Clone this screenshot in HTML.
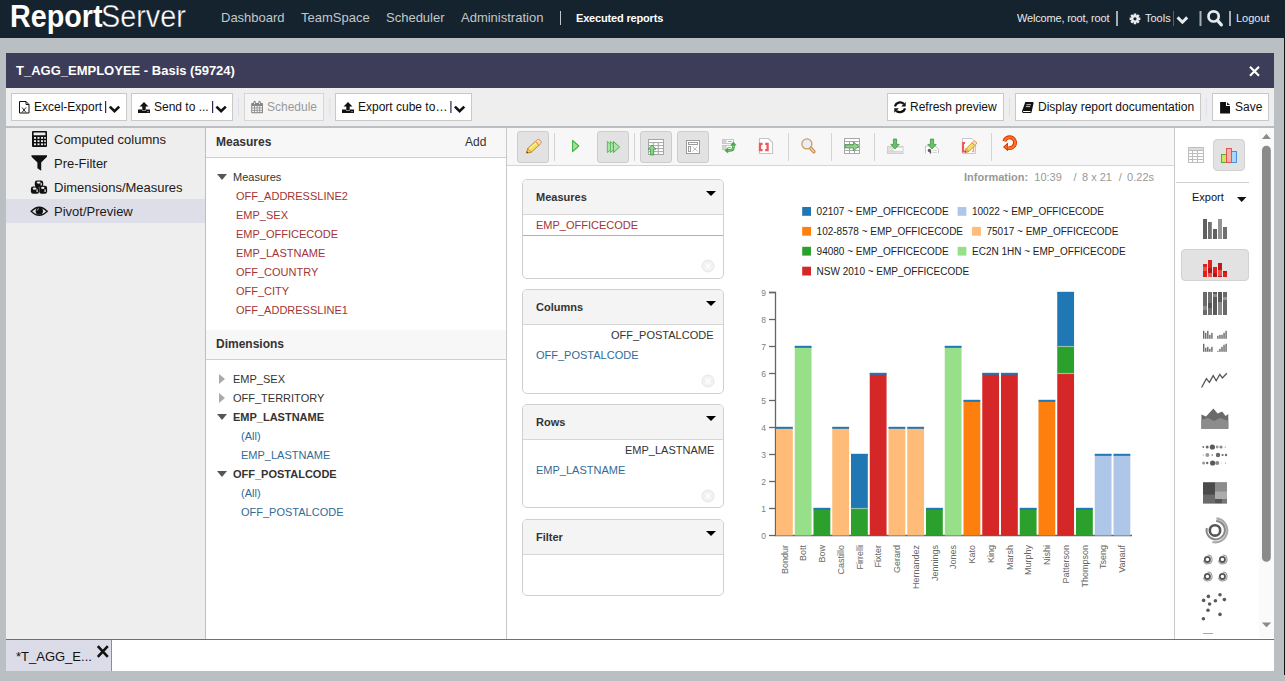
<!DOCTYPE html>
<html><head><meta charset="utf-8">
<style>
*{box-sizing:border-box;margin:0;padding:0}
html,body{width:1285px;height:681px;overflow:hidden}
body{background:#b9bfc2;font-family:"Liberation Sans",sans-serif;position:relative;color:#222}
.a{position:absolute;white-space:nowrap}
#nav{left:0;top:0;width:1285px;height:38px;background:#15232f}
.nv{color:#c3c7cb;font-size:13px;top:10px}
.nr{color:#e8eaec;font-size:11px;top:12px}
.sep{background:#9aa0a6;width:2px;height:16px;top:11px}
#win{left:6px;top:53px;width:1268px;height:618px;background:#fff}
#title{left:6px;top:53px;width:1268px;height:35px;background:#3d3c59}
#tb{left:6px;top:88px;width:1268px;height:40px;background:#eeeeee;border-bottom:2px solid #b9bfc2}
.btn{height:28px;top:93px;background:#fff;border:1px solid #c9c9c9;font-size:12px;color:#111;line-height:26px}
#lnav{left:6px;top:128px;width:200px;height:511px;background:#eeeeee;border-right:1px solid #b9bfc2}
.li{font-size:13px;color:#1a1a1a;left:54px}
#mp{left:206px;top:128px;width:301px;height:511px;background:#fff;border-right:1px solid #c5c9cc}
.ph{background:#f7f7f7;border-bottom:1px solid #d0d0d0;font-size:12px;font-weight:bold;color:#333}
.red{color:#a33434;font-size:11px}
.blu{color:#336a96;font-size:11px}
.dk{color:#333;font-size:11px}
#pv{left:507px;top:128px;width:668px;height:511px;background:#fff}
#ptb{left:507px;top:128px;width:667px;height:38px;background:#f7f7f7;border-bottom:1px solid #d4d4d4}
#rp{left:1174px;top:128px;width:100px;height:511px;background:#fff;border-left:1px solid #c9c9c9}
#tabs{left:6px;top:639px;width:1268px;height:32px;background:#fff;border-top:1px solid #6c6c86}
.box{left:522px;width:202px;border:1px solid #cfcfcf;border-radius:5px;background:#fff;overflow:hidden}
.bh{height:35px;background:#f4f4f4;border-bottom:1px solid #d6d6d6;font-size:11px;line-height:14px;font-weight:bold;color:#333;padding:10px 0 0 13px;position:relative}
.bh:after{content:"";position:absolute;right:7px;top:11px;border-left:5px solid transparent;border-right:5px solid transparent;border-top:5px solid #000}
.tri{width:0;height:0;border-left:5px solid transparent;border-right:5px solid transparent;border-top:6px solid #555}
.trr{width:0;height:0;border-top:5px solid transparent;border-bottom:5px solid transparent;border-left:6px solid #aaa}
.tbtn{width:32px;height:32px;background:#e2e2e2;border:1px solid #cdcdcd;border-radius:3px}
.inf{top:170px;font-size:11px;color:#999;line-height:14px}
.vs{top:133px;width:1px;height:28px;background:#d4d4d4}
</style></head><body>
<div class="a" id="nav"></div>
<!-- logo -->
<div class="a" style="left:10px;top:-2px;font-size:31px;color:#fff;line-height:38px;transform-origin:0 0;transform:scaleX(0.927)"><b>Report</b></div>
<div class="a" style="left:101px;top:-2px;font-size:31px;color:#ffffff;line-height:38px;transform-origin:0 0;transform:scaleX(0.93);-webkit-text-stroke:0.4px #15232f">Server</div>
<div class="a nv" style="left:221px">Dashboard</div>
<div class="a nv" style="left:301px">TeamSpace</div>
<div class="a nv" style="left:386px">Scheduler</div>
<div class="a nv" style="left:461px">Administration</div>
<div class="a" style="left:560px;top:11px;width:1px;height:14px;background:#c3c7cb"></div>
<div class="a" style="left:576px;top:12px;font-size:11px;font-weight:bold;color:#fff;letter-spacing:-0.17px">Executed reports</div>
<div class="a nr" style="left:1017px;letter-spacing:-0.18px">Welcome, root, root</div>
<div class="a nr" style="left:1145px">Tools</div>
<div class="a nr" style="left:1236px">Logout</div>

<div class="a" id="win"></div>
<div class="a" id="title"></div>
<div class="a" style="left:16px;top:63px;font-size:13px;font-weight:bold;color:#fff">T_AGG_EMPLOYEE - Basis (59724)</div>
<div class="a" id="tb"></div>
<div class="a btn" style="left:11px;width:116px;padding-left:22px">Excel-Export</div>
<div class="a btn" style="left:131px;width:102px;padding-left:22px">Send to ...</div>
<div class="a btn" style="left:244px;width:80px;padding-left:22px;color:#999;background:#f5f5f5;border-color:#d6d6d6">Schedule</div>
<div class="a btn" style="left:335px;width:137px;padding-left:22px">Export cube to…</div>
<div class="a btn" style="left:887px;width:117px;padding-left:22px">Refresh preview</div>
<div class="a btn" style="left:1015px;width:186px;padding-left:22px">Display report documentation</div>
<div class="a btn" style="left:1212px;width:57px;padding-left:22px">Save</div>

<div class="a" id="lnav"></div>
<div class="a" style="left:6px;top:199px;width:199px;height:24px;background:#dedee9"></div>
<div class="a li" style="top:132px">Computed columns</div>
<div class="a li" style="top:156px">Pre-Filter</div>
<div class="a li" style="top:180px">Dimensions/Measures</div>
<div class="a li" style="top:204px">Pivot/Preview</div>

<div class="a" id="mp"></div>
<div class="a ph" style="left:206px;top:128px;width:300px;height:30px"></div>
<div class="a" style="left:216px;top:135px;font-size:12px;font-weight:bold;color:#333;line-height:14px">Measures</div>
<div class="a" style="left:465px;top:135px;font-size:12px;color:#333;line-height:14px">Add</div>
<div class="a tri" style="left:217px;top:174px"></div>
<div class="a dk" style="left:233px;top:170px;line-height:14px">Measures</div>
<div class="a red" style="left:236px;top:189px;line-height:14px">OFF_ADDRESSLINE2</div>
<div class="a red" style="left:236px;top:208px;line-height:14px">EMP_SEX</div>
<div class="a red" style="left:236px;top:227px;line-height:14px">EMP_OFFICECODE</div>
<div class="a red" style="left:236px;top:246px;line-height:14px">EMP_LASTNAME</div>
<div class="a red" style="left:236px;top:265px;line-height:14px">OFF_COUNTRY</div>
<div class="a red" style="left:236px;top:284px;line-height:14px">OFF_CITY</div>
<div class="a red" style="left:236px;top:303px;line-height:14px">OFF_ADDRESSLINE1</div>
<div class="a ph" style="left:206px;top:330px;width:300px;height:30px;border-top:0"></div>
<div class="a" style="left:216px;top:337px;font-size:12px;font-weight:bold;color:#333;line-height:14px">Dimensions</div>
<div class="a trr" style="left:219px;top:374px"></div>
<div class="a dk" style="left:233px;top:372px;line-height:14px">EMP_SEX</div>
<div class="a trr" style="left:219px;top:393px"></div>
<div class="a dk" style="left:233px;top:391px;line-height:14px">OFF_TERRITORY</div>
<div class="a tri" style="left:217px;top:414px"></div>
<div class="a dk" style="left:233px;top:410px;line-height:14px;font-weight:bold">EMP_LASTNAME</div>
<div class="a blu" style="left:241px;top:429px;line-height:14px">(All)</div>
<div class="a blu" style="left:241px;top:448px;line-height:14px">EMP_LASTNAME</div>
<div class="a tri" style="left:217px;top:471px"></div>
<div class="a dk" style="left:233px;top:467px;line-height:14px;font-weight:bold">OFF_POSTALCODE</div>
<div class="a blu" style="left:241px;top:486px;line-height:14px">(All)</div>
<div class="a blu" style="left:241px;top:505px;line-height:14px">OFF_POSTALCODE</div>

<div class="a" id="pv"></div>
<div class="a" id="ptb"></div>
<div class="a tbtn" style="left:517px;top:131px"></div>
<div class="a tbtn" style="left:597px;top:131px"></div>
<div class="a tbtn" style="left:640px;top:131px"></div>
<div class="a tbtn" style="left:677px;top:131px"></div>
<div class="a vs" style="left:554px"></div>
<div class="a vs" style="left:634px"></div>
<div class="a vs" style="left:788px"></div>
<div class="a vs" style="left:831px"></div>
<div class="a vs" style="left:874px"></div>
<div class="a vs" style="left:991px"></div>
<div class="a inf" style="left:964px"><b>Information:</b></div>
<div class="a inf" style="left:1034.3px">10:39</div>
<div class="a inf" style="left:1073.6px">/</div>
<div class="a inf" style="left:1082px">8 x 21</div>
<div class="a inf" style="left:1118.8px">/</div>
<div class="a inf" style="left:1127.1px">0.22s</div>

<div class="a box" style="top:179px;height:100px"><div class="bh">Measures</div></div>
<div class="a red" style="left:536px;top:218px;line-height:14px">EMP_OFFICECODE</div>
<div class="a" style="left:523px;top:235px;width:200px;height:1px;background:#e59a9a"></div>
<div class="a box" style="top:289px;height:105px"><div class="bh">Columns</div></div>
<div class="a dk" style="left:611px;top:328px;line-height:14px">OFF_POSTALCODE</div>
<div class="a blu" style="left:536px;top:348px;line-height:14px">OFF_POSTALCODE</div>
<div class="a box" style="top:404px;height:104px"><div class="bh">Rows</div></div>
<div class="a dk" style="left:625px;top:443px;line-height:14px">EMP_LASTNAME</div>
<div class="a blu" style="left:536px;top:463px;line-height:14px">EMP_LASTNAME</div>
<div class="a box" style="top:519px;height:77px"><div class="bh">Filter</div></div>
<svg class="a" style="left:0;top:0" width="1285" height="681" font-family="Liberation Sans, sans-serif"><path d="M769 292.5H775.5V535.5H1132" fill="none" stroke="#666" stroke-width="1.3"/><path d="M769 535.5H775.5" stroke="#666" stroke-width="1.3"/><text x="766" y="538.5" text-anchor="end" font-size="8.5" fill="#808080">0</text><path d="M769 508.5H775.5" stroke="#666" stroke-width="1.3"/><text x="766" y="511.5" text-anchor="end" font-size="8.5" fill="#808080">1</text><path d="M769 481.5H775.5" stroke="#666" stroke-width="1.3"/><text x="766" y="484.5" text-anchor="end" font-size="8.5" fill="#808080">2</text><path d="M769 454.5H775.5" stroke="#666" stroke-width="1.3"/><text x="766" y="457.5" text-anchor="end" font-size="8.5" fill="#808080">3</text><path d="M769 427.5H775.5" stroke="#666" stroke-width="1.3"/><text x="766" y="430.5" text-anchor="end" font-size="8.5" fill="#808080">4</text><path d="M769 400.5H775.5" stroke="#666" stroke-width="1.3"/><text x="766" y="403.5" text-anchor="end" font-size="8.5" fill="#808080">5</text><path d="M769 373.5H775.5" stroke="#666" stroke-width="1.3"/><text x="766" y="376.5" text-anchor="end" font-size="8.5" fill="#808080">6</text><path d="M769 346.5H775.5" stroke="#666" stroke-width="1.3"/><text x="766" y="349.5" text-anchor="end" font-size="8.5" fill="#808080">7</text><path d="M769 319.5H775.5" stroke="#666" stroke-width="1.3"/><text x="766" y="322.5" text-anchor="end" font-size="8.5" fill="#808080">8</text><path d="M769 292.5H775.5" stroke="#666" stroke-width="1.3"/><text x="766" y="295.5" text-anchor="end" font-size="8.5" fill="#808080">9</text><rect x="776.00" y="427.50" width="16.8" height="108.00" fill="#ffbb78"/><rect x="776.00" y="426.80" width="16.8" height="2" fill="#1f77b4"/><text transform="translate(787.6,545) rotate(-90)" text-anchor="end" font-size="9" fill="#666">Bondur</text><rect x="794.75" y="346.50" width="16.8" height="189.00" fill="#98df8a"/><rect x="794.75" y="345.80" width="16.8" height="2" fill="#1f77b4"/><text transform="translate(806.4,545) rotate(-90)" text-anchor="end" font-size="9" fill="#666">Bott</text><rect x="813.50" y="508.50" width="16.8" height="27.00" fill="#2ca02c"/><rect x="813.50" y="507.80" width="16.8" height="2" fill="#1f77b4"/><text transform="translate(825.1,545) rotate(-90)" text-anchor="end" font-size="9" fill="#666">Bow</text><rect x="832.25" y="427.50" width="16.8" height="108.00" fill="#ffbb78"/><rect x="832.25" y="426.80" width="16.8" height="2" fill="#1f77b4"/><text transform="translate(843.9,545) rotate(-90)" text-anchor="end" font-size="9" fill="#666">Castillo</text><rect x="851.00" y="508.50" width="16.8" height="27.00" fill="#2ca02c"/><rect x="851.00" y="454.50" width="16.8" height="54.00" fill="#1f77b4"/><rect x="851.00" y="453.80" width="16.8" height="2" fill="#1f77b4"/><rect x="851.00" y="507.90" width="16.8" height="1.2" fill="#b8d8a8" opacity="0.6"/><text transform="translate(862.6,545) rotate(-90)" text-anchor="end" font-size="9" fill="#666">Firrelli</text><rect x="869.75" y="373.50" width="16.8" height="162.00" fill="#d62728"/><rect x="869.75" y="372.80" width="16.8" height="2" fill="#1f77b4"/><text transform="translate(881.4,545) rotate(-90)" text-anchor="end" font-size="9" fill="#666">Fixter</text><rect x="888.50" y="427.50" width="16.8" height="108.00" fill="#ffbb78"/><rect x="888.50" y="426.80" width="16.8" height="2" fill="#1f77b4"/><text transform="translate(900.1,545) rotate(-90)" text-anchor="end" font-size="9" fill="#666">Gerard</text><rect x="907.25" y="427.50" width="16.8" height="108.00" fill="#ffbb78"/><rect x="907.25" y="426.80" width="16.8" height="2" fill="#1f77b4"/><text transform="translate(918.9,545) rotate(-90)" text-anchor="end" font-size="9" fill="#666">Hernandez</text><rect x="926.00" y="508.50" width="16.8" height="27.00" fill="#2ca02c"/><rect x="926.00" y="507.80" width="16.8" height="2" fill="#1f77b4"/><text transform="translate(937.6,545) rotate(-90)" text-anchor="end" font-size="9" fill="#666">Jennings</text><rect x="944.75" y="346.50" width="16.8" height="189.00" fill="#98df8a"/><rect x="944.75" y="345.80" width="16.8" height="2" fill="#1f77b4"/><text transform="translate(956.4,545) rotate(-90)" text-anchor="end" font-size="9" fill="#666">Jones</text><rect x="963.50" y="400.50" width="16.8" height="135.00" fill="#ff7f0e"/><rect x="963.50" y="399.80" width="16.8" height="2" fill="#1f77b4"/><text transform="translate(975.1,545) rotate(-90)" text-anchor="end" font-size="9" fill="#666">Kato</text><rect x="982.25" y="373.50" width="16.8" height="162.00" fill="#d62728"/><rect x="982.25" y="372.80" width="16.8" height="2" fill="#1f77b4"/><text transform="translate(993.9,545) rotate(-90)" text-anchor="end" font-size="9" fill="#666">King</text><rect x="1001.00" y="373.50" width="16.8" height="162.00" fill="#d62728"/><rect x="1001.00" y="372.80" width="16.8" height="2" fill="#1f77b4"/><text transform="translate(1012.6,545) rotate(-90)" text-anchor="end" font-size="9" fill="#666">Marsh</text><rect x="1019.75" y="508.50" width="16.8" height="27.00" fill="#2ca02c"/><rect x="1019.75" y="507.80" width="16.8" height="2" fill="#1f77b4"/><text transform="translate(1031.4,545) rotate(-90)" text-anchor="end" font-size="9" fill="#666">Murphy</text><rect x="1038.50" y="400.50" width="16.8" height="135.00" fill="#ff7f0e"/><rect x="1038.50" y="399.80" width="16.8" height="2" fill="#1f77b4"/><text transform="translate(1050.1,545) rotate(-90)" text-anchor="end" font-size="9" fill="#666">Nishi</text><rect x="1057.25" y="373.50" width="16.8" height="162.00" fill="#d62728"/><rect x="1057.25" y="346.50" width="16.8" height="27.00" fill="#2ca02c"/><rect x="1057.25" y="292.50" width="16.8" height="54.00" fill="#1f77b4"/><rect x="1057.25" y="291.80" width="16.8" height="2" fill="#1f77b4"/><rect x="1057.25" y="372.90" width="16.8" height="1.2" fill="#b8d8a8" opacity="0.6"/><rect x="1057.25" y="345.90" width="16.8" height="1.2" fill="#b8d8a8" opacity="0.6"/><text transform="translate(1068.9,545) rotate(-90)" text-anchor="end" font-size="9" fill="#666">Patterson</text><rect x="1076.00" y="508.50" width="16.8" height="27.00" fill="#2ca02c"/><rect x="1076.00" y="507.80" width="16.8" height="2" fill="#1f77b4"/><text transform="translate(1087.6,545) rotate(-90)" text-anchor="end" font-size="9" fill="#666">Thompson</text><rect x="1094.75" y="454.50" width="16.8" height="81.00" fill="#aec7e8"/><rect x="1094.75" y="453.80" width="16.8" height="2" fill="#1f77b4"/><text transform="translate(1106.4,545) rotate(-90)" text-anchor="end" font-size="9" fill="#666">Tseng</text><rect x="1113.50" y="454.50" width="16.8" height="81.00" fill="#aec7e8"/><rect x="1113.50" y="453.80" width="16.8" height="2" fill="#1f77b4"/><text transform="translate(1125.1,545) rotate(-90)" text-anchor="end" font-size="9" fill="#666">Vanauf</text><rect x="802.2" y="207.0" width="8.8" height="8.8" fill="#1f77b4"/><text x="816.6" y="215.0" font-size="10" fill="#222">02107 ~ EMP_OFFICECODE</text><rect x="957.6" y="207.0" width="8.8" height="8.8" fill="#aec7e8"/><text x="972.0" y="215.0" font-size="10" fill="#222">10022 ~ EMP_OFFICECODE</text><rect x="802.2" y="226.9" width="8.8" height="8.8" fill="#ff7f0e"/><text x="816.6" y="234.9" font-size="10" fill="#222">102-8578 ~ EMP_OFFICECODE</text><rect x="972.1" y="226.9" width="8.8" height="8.8" fill="#ffbb78"/><text x="986.5" y="234.9" font-size="10" fill="#222">75017 ~ EMP_OFFICECODE</text><rect x="802.2" y="246.8" width="8.8" height="8.8" fill="#2ca02c"/><text x="816.6" y="254.8" font-size="10" fill="#222">94080 ~ EMP_OFFICECODE</text><rect x="957.6" y="246.8" width="8.8" height="8.8" fill="#98df8a"/><text x="972.0" y="254.8" font-size="10" fill="#222">EC2N 1HN ~ EMP_OFFICECODE</text><rect x="802.2" y="266.7" width="8.8" height="8.8" fill="#d62728"/><text x="816.6" y="274.7" font-size="10" fill="#222">NSW 2010 ~ EMP_OFFICECODE</text></svg>

<div class="a" id="rp"></div>
<div class="a" style="left:1213px;top:139px;width:32px;height:32px;background:#e2e2e2;border:1px solid #d2d2d2;border-radius:4px"></div>
<div class="a" style="left:1176px;top:182px;width:73px;height:1px;background:#cfcfcf"></div>
<div class="a" style="left:1192px;top:190px;font-size:11px;line-height:14px;color:#111">Export</div>
<div class="a" style="left:1181px;top:249px;width:68px;height:32px;background:#e2e2e2;border:1px solid #d2d2d2;border-radius:4px"></div>
<div class="a" id="tabs"></div>
<div class="a" style="left:6px;top:640px;width:106px;height:31px;background:#dcdce8;border-right:1px solid #8a8aa6"></div>
<div class="a" style="left:16px;top:649px;font-size:13px;color:#111">*T_AGG_E...</div>
<div class="a" style="left:1284px;top:38px;width:1px;height:637px;background:#141414"></div>
<svg class="a" style="left:0;top:0" width="1285" height="681">
<!-- top nav -->
<rect x="1116" y="11" width="2" height="15" fill="#a7adb2"/>
<g transform="translate(1135,18.8)" fill="#e8eaec"><path d="M3.65,-1.37 L5.37,-1.20 L5.37,1.20 L3.65,1.37 L3.55,1.61 L4.64,2.95 L2.95,4.64 L1.61,3.55 L1.37,3.65 L1.20,5.37 L-1.20,5.37 L-1.37,3.65 L-1.61,3.55 L-2.95,4.64 L-4.64,2.95 L-3.55,1.61 L-3.65,1.37 L-5.37,1.20 L-5.37,-1.20 L-3.65,-1.37 L-3.55,-1.61 L-4.64,-2.95 L-2.95,-4.64 L-1.61,-3.55 L-1.37,-3.65 L-1.20,-5.37 L1.20,-5.37 L1.37,-3.65 L1.61,-3.55 L2.95,-4.64 L4.64,-2.95 L3.55,-1.61 Z M1.6,0 A1.6,1.6 0 1,0 -1.6,0 A1.6,1.6 0 1,0 1.6,0 Z" fill-rule="evenodd"/></g>
<rect x="1173" y="11" width="1" height="15" fill="#56606a"/>
<path d="M1177.6,17.4 L1182.4,22.2 L1187.2,17.4" fill="none" stroke="#e8eaec" stroke-width="3"/>
<rect x="1199.5" y="11" width="2" height="15" fill="#a7adb2"/>
<circle cx="1213.6" cy="16.4" r="5.1" fill="none" stroke="#e8eaec" stroke-width="2.7"/>
<path d="M1217.2,20.2 L1221.4,24.8" stroke="#e8eaec" stroke-width="3.2" stroke-linecap="round"/>
<rect x="1229" y="11" width="2" height="15" fill="#a7adb2"/>
<!-- window close -->
<path d="M1250,66.8 L1259,75.8 M1259,66.8 L1250,75.8" stroke="#fff" stroke-width="2.2"/>
<!-- toolbar -->
<g fill="none" stroke="#111" stroke-width="1">
<path d="M19.5,101.5 h6.5 l3,3 v8.5 h-9.5 z M26,101.5 v3 h3"/>
<path d="M22,107.5 l4,5 M26,107.5 l-4,5" stroke-width="0.9"/>
</g>
<g fill="#111">
<path d="M138,109.5 h4.2 v1.6 h3.6 v-1.6 h4.2 v3.6 h-12 z"/>
<path d="M144,102 l4.5,4.5 h-2.8 v4 h-3.4 v-4 h-2.8 z"/>
<rect x="147.5" y="111.2" width="1" height="1" fill="#fff"/>
<path d="M342,109.5 h4.2 v1.6 h3.6 v-1.6 h4.2 v3.6 h-12 z"/>
<path d="M348,102 l4.5,4.5 h-2.8 v4 h-3.4 v-4 h-2.8 z"/>
<rect x="351.5" y="111.2" width="1" height="1" fill="#fff"/>
</g>
<rect x="105" y="101" width="1.2" height="12" fill="#2b2b55"/>
<rect x="212" y="101" width="1.2" height="12" fill="#2b2b55"/>
<rect x="450.3" y="101" width="1.2" height="12" fill="#2b2b55"/>
<g fill="none" stroke="#111" stroke-width="2.6">
<path d="M109.8,106.6 L114.5,111.2 L119.2,106.6"/>
<path d="M216.4,106.6 L221.1,111.2 L225.8,106.6"/>
<path d="M454.9,106.6 L459.6,111.2 L464.3,106.6"/>
</g>
<g fill="#dde0ea">
<rect x="238" y="98" width="1" height="18"/>
<rect x="329.3" y="98" width="1" height="18"/>
<rect x="1009" y="98" width="1" height="18"/>
<rect x="1205.8" y="98" width="1" height="18"/>
</g>
<!-- calendar -->
<g>
<rect x="251.2" y="103" width="11.8" height="10.2" rx="0.8" fill="#858585"/>
<rect x="252.20" y="106.00" width="1.85" height="1.53" fill="#f5f5f5"/><rect x="252.20" y="108.33" width="1.85" height="1.53" fill="#f5f5f5"/><rect x="252.20" y="110.66" width="1.85" height="1.53" fill="#f5f5f5"/><rect x="254.85" y="106.00" width="1.85" height="1.53" fill="#f5f5f5"/><rect x="254.85" y="108.33" width="1.85" height="1.53" fill="#f5f5f5"/><rect x="254.85" y="110.66" width="1.85" height="1.53" fill="#f5f5f5"/><rect x="257.50" y="106.00" width="1.85" height="1.53" fill="#f5f5f5"/><rect x="257.50" y="108.33" width="1.85" height="1.53" fill="#f5f5f5"/><rect x="257.50" y="110.66" width="1.85" height="1.53" fill="#f5f5f5"/><rect x="260.15" y="106.00" width="1.85" height="1.53" fill="#f5f5f5"/><rect x="260.15" y="108.33" width="1.85" height="1.53" fill="#f5f5f5"/><rect x="260.15" y="110.66" width="1.85" height="1.53" fill="#f5f5f5"/>
<ellipse cx="254.6" cy="102.6" rx="1.2" ry="1.8" fill="#858585"/><ellipse cx="259.6" cy="102.6" rx="1.2" ry="1.8" fill="#858585"/>
<ellipse cx="254.6" cy="103.2" rx="0.5" ry="1" fill="#f0f0f0"/><ellipse cx="259.6" cy="103.2" rx="0.5" ry="1" fill="#f0f0f0"/>
</g>
<!-- refresh -->
<g fill="#111">
<path d="M894.9,106.3 A5.5,5.5 0 0 1 903.8,103.8" fill="none" stroke="#111" stroke-width="2.3"/>
<path d="M905.7,102 L905.7,106.5 L901.2,106.5 Z"/>
<path d="M905.1,108.3 A5.5,5.5 0 0 1 896.2,110.8" fill="none" stroke="#111" stroke-width="2.3"/>
<path d="M894.3,112.8 L894.3,108.3 L898.8,108.3 Z"/>
</g>
<!-- book -->
<g>
<path d="M1025.3,102 H1033 L1033.6,103 L1032,110.2 L1031.8,111.2 L1031.2,113 H1023.4 Q1021.6,113 1022,111.2 Z" fill="#111"/>
<path d="M1023.4,110.9 H1030.7 L1030.3,112 H1023.6 Q1022.9,112 1023,111.5 Z" fill="#fff"/>
<path d="M1026.4,104.7 H1031 M1025.9,106.6 H1030.2" stroke="#fff" stroke-width="0.75"/>
</g>
<!-- save file -->
<path d="M1220.1,102 H1226 V106 H1230 V113.6 H1220.1 Z M1227.1,102.2 L1230,105 H1227.1 Z" fill="#111"/>

<!-- left nav icons -->
<g fill="#111">
<path d="M33,131 h13 q1,0 1,1 v14 q0,1 -1,1 h-13 q-1,0 -1,-1 v-14 q0,-1 1,-1 z M33.6,132.4 v2.8 h11.8 v-2.8 z" fill-rule="evenodd"/>
</g>
<g fill="#eee">
<rect x="34" y="137" width="2" height="1.8"/><rect x="37.5" y="137" width="2" height="1.8"/><rect x="41" y="137" width="2" height="1.8"/><rect x="44.2" y="137" width="1.6" height="1.8"/>
<rect x="34" y="140.2" width="2" height="1.8"/><rect x="37.5" y="140.2" width="2" height="1.8"/><rect x="41" y="140.2" width="2" height="1.8"/><rect x="44.2" y="140.2" width="1.6" height="1.8"/>
<rect x="34" y="143.4" width="2" height="1.8"/><rect x="37.5" y="143.4" width="2" height="1.8"/><rect x="41" y="143.4" width="2" height="1.8"/><rect x="44.2" y="143.4" width="1.6" height="1.8"/>
</g>
<path d="M31.5,155.2 h15.5 v1.6 l-5.8,5.8 v8.2 l-3.8,-2.6 v-5.6 l-5.9,-5.8 z" fill="#111"/>
<g><rect x="34.8" y="180.5" width="8.4" height="6.8" rx="2.2" fill="#111"/><ellipse cx="38.60" cy="182.60" rx="2.00" ry="1.1" fill="#eee"/><rect x="40.60" y="182.90" width="1.2" height="2.6" fill="#eee"/><rect x="39.3" y="185.8" width="7.8" height="8" rx="2.2" fill="#111"/><ellipse cx="42.80" cy="187.90" rx="1.70" ry="1.1" fill="#eee"/><rect x="44.50" y="189.40" width="1.2" height="2.6" fill="#eee"/><rect x="30.9" y="186.6" width="8.2" height="7.2" rx="2.2" fill="#111"/><ellipse cx="34.60" cy="188.70" rx="1.90" ry="1.1" fill="#eee"/><rect x="36.50" y="189.40" width="1.2" height="2.6" fill="#eee"/></g>
<g>
<path d="M31.2,211.3 Q39.2,203.2 47.2,211.3 Q39.2,219.4 31.2,211.3 Z" fill="none" stroke="#111" stroke-width="1.4"/>
<circle cx="39.3" cy="211.1" r="3.7" fill="#111"/>
<path d="M37,210.6 Q37.4,208.9 39,208.6" fill="none" stroke="#ddd" stroke-width="0.7"/>
</g>
<!-- pivot toolbar icons -->
<g transform="translate(526.3,153.3) rotate(-42.5)" stroke-linejoin="round">
<path d="M0.5,0 L4.4,-2.6 H15 V2.6 H4.4 Z" fill="#f2e060" stroke="#c8861e" stroke-width="0.9"/>
<path d="M0.5,0 L4.4,-2.6 V2.6 Z" fill="#f3c8a0" stroke="#c8861e" stroke-width="0.8"/>
<path d="M0.3,0 L1.8,-1 V1 Z" fill="#4a300a"/>
<path d="M15,-2.6 H17.6 Q19,-2.6 19,0 Q19,2.6 17.6,2.6 H15 Z" fill="#f8dcc4" stroke="#d8904a" stroke-width="0.9"/>
<path d="M5,-1.2 H14" stroke="#fff6b0" stroke-width="1"/>
</g>
<path d="M572.6,140.4 L578.8,146 L572.6,151.6 Z" fill="#a6dea6" stroke="#3db33d" stroke-width="1.1" stroke-linejoin="round"/>
<g fill="#b0e2b0" stroke="#4cbc4c" stroke-width="0.9" stroke-linejoin="round">
<path d="M607.4,141.4 L613.6,147 L607.4,152.6 Z"/>
<path d="M610.4,141.4 L616.6,147 L610.4,152.6 Z"/>
<path d="M613.4,141.4 L619.6,147 L613.4,152.6 Z" stroke="#36ae36"/>
</g>
<!-- table upload -->
<rect x="648.5" y="139.5" width="15" height="15" fill="#fff" stroke="#a6a6a6" stroke-width="1"/>
<g stroke="#a6a6a6" stroke-width="1" fill="none">
<path d="M648.5,142.6 h15 M648.5,145.6 h15 M648.5,148.6 h15 M648.5,151.6 h15 M653.3,142.6 v12 M658.3,142.6 v12"/>
</g>
<path d="M652.1,145 l3.9,4.2 h-2.3 v5.8 h-3.2 v-5.8 h-2.3 z" fill="#8ed28e" stroke="#2f8f2f" stroke-width="0.7" stroke-linejoin="round"/>
<!-- clear table -->
<g fill="none" stroke="#9c9c9c" stroke-width="1">
<rect x="686.5" y="140.5" width="13" height="13" fill="#fff"/>
<rect x="688.5" y="142.5" width="9" height="2"/>
<rect x="688.5" y="146.5" width="2" height="5"/>
<path d="M692.5,146.5 l5,5 M697.5,146.5 l-5,5" stroke="#b0b0b0" stroke-width="0.8"/>
</g>
<!-- swap -->
<g>
<rect x="722.5" y="139.5" width="11" height="4" fill="#fff" stroke="#c8c8c8" stroke-width="1"/>
<rect x="722.5" y="139.5" width="3.5" height="4" fill="#d4d4d4" stroke="#c8c8c8" stroke-width="1"/>
<rect x="722.5" y="145.5" width="11" height="4" fill="#fff" stroke="#c8c8c8" stroke-width="1"/>
<rect x="722.5" y="145.5" width="3.5" height="4" fill="#d4d4d4" stroke="#c8c8c8" stroke-width="1"/>
<path d="M727.8,141.5 h4" stroke="#7aaee0" stroke-width="0.9"/><path d="M727.8,147.5 h3" stroke="#e88080" stroke-width="0.9"/>
<path d="M733.4,144.6 V147.2 Q733.4,150.4 729.6,150.4 H727.4" fill="none" stroke="#3f9f3f" stroke-width="2.6"/>
<path d="M733.4,144.6 V147.2 Q733.4,150.4 729.6,150.4 H727.4" fill="none" stroke="#9ad69a" stroke-width="0.9"/>
<path d="M730.2,145.6 L733.4,141.6 L736.6,145.6 Z" fill="#4aaa4a"/>
<path d="M728.2,147.2 L724.4,150.4 L728.2,153.6 Z" fill="#4aaa4a"/>
</g>
<!-- red bracket doc -->
<g>
<path d="M759.5,138.5 h9 l4,4 v11 h-13 z" fill="#fff" stroke="#c4c4c4" stroke-width="1.1"/>
<path d="M762.6,143.8 H760 V150.2 H762.6 M765.2,143.8 H767.6 V150.2 H765.2" fill="none" stroke="#ee5a5a" stroke-width="2.3"/>
</g>
<!-- magnifier -->
<g>
<path d="M810.2,147.6 L813.8,151.6" stroke="#c0804a" stroke-width="3.6" stroke-linecap="round"/>
<path d="M810.2,147.6 L813.8,151.6" stroke="#ecd49a" stroke-width="1.6" stroke-linecap="round"/>
<circle cx="806.9" cy="143.9" r="5" fill="#e6eef8" stroke="#d19a5c" stroke-width="1.3"/>
</g>
<!-- table arrow -->
<rect x="844.5" y="138.5" width="15" height="15" fill="#fff" stroke="#a8a8a8" stroke-width="1"/>
<g fill="none" stroke="#a8a8a8" stroke-width="1">
<path d="M844.5,141.5 h15 M844.5,144.5 h15 M844.5,147.5 h15 M844.5,150.5 h15 M849.5,141.5 v12 M854.5,141.5 v12"/>
</g>
<path d="M845,144.8 h8.4 v-2.6 l5.6,4.2 l-5.6,4.2 v-2.6 h-8.4 z" fill="#8ed08e" stroke="#2f8f2f" stroke-width="0.7" stroke-linejoin="round"/>
<!-- download tray -->
<g>
<rect x="887.5" y="146.5" width="15.5" height="7" fill="#e2e2e2" stroke="#cfcfcf" stroke-width="1"/>
<rect x="893" y="148.2" width="9.4" height="3" fill="#fff"/>
<path d="M887.5,151.2 H903 M893,146.5 V153.5" stroke="#cfcfcf" stroke-width="0.8"/>
<path d="M893.4,139 h3.2 v5.4 h2.6 l-4.2,4.6 l-4.2,-4.6 h2.6 z" fill="#6cc06c" stroke="#2f8f2f" stroke-width="0.7" stroke-linejoin="round"/>
</g>
<g>
<path d="M925.5,153.5 V146 h9.5 l3.5,3.2 v4.3" fill="#fff" stroke="#c4c4c4" stroke-width="1"/>
<path d="M932.5,150.2 h4.6 M932.5,152.4 h4.6" stroke="#c4c4c4" stroke-width="0.8"/>
<circle cx="929.4" cy="150.4" r="1.7" fill="#5a5a5a"/><rect x="929.6" y="151" width="1.6" height="2.5" fill="#5a5a5a"/>
<path d="M930.4,139 h3.2 v5.4 h2.6 l-4.2,4.6 l-4.2,-4.6 h2.6 z" fill="#6cc06c" stroke="#2f8f2f" stroke-width="0.7" stroke-linejoin="round"/>
</g>
<!-- edit doc -->
<g>
<path d="M962.5,138.5 h9.5 l3.5,3.5 v11.5 h-13 z" fill="#fff" stroke="#c8c8c8" stroke-width="1"/>
<path d="M965,143 H963 V151.5 H965" fill="none" stroke="#ee5a5a" stroke-width="2.2"/>
<path d="M972,143 H973.6 V151.5 H972" fill="none" stroke="#f4a0a0" stroke-width="1.4"/>
</g>
<g transform="translate(965,152.6) rotate(-45)" stroke-linejoin="round">
<path d="M0.4,0 L3.6,-2 H12 V2 H3.6 Z" fill="#f2e060" stroke="#c8861e" stroke-width="0.8"/>
<path d="M0.4,0 L3.6,-2 V2 Z" fill="#f3c8a0" stroke="#c8861e" stroke-width="0.7"/>
<path d="M0.2,0 L1.5,-0.8 V0.8 Z" fill="#4a300a"/>
<path d="M12,-2 H14 Q15.4,-2 15.4,0 Q15.4,2 14,2 H12 Z" fill="#f8dcc4" stroke="#d8904a" stroke-width="0.8"/>
</g>
<!-- red undo -->
<g>
<path d="M1004.4,141.2 A5.4,5.4 0 1 1 1008.2,147.9" fill="none" stroke="#d8300c" stroke-width="4"/>
<path d="M1003,147 L1008,142.6 L1008,151.2 Z" fill="#d8300c"/>
<path d="M1004.6,141.2 A5.4,5.4 0 1 1 1008.2,147.9" fill="none" stroke="#ff7418" stroke-width="2.2"/>
<path d="M1004.4,147 L1007.3,144.4 L1007.3,149.6 Z" fill="#ff7418"/>
</g>
<!-- right panel -->
<g fill="none" stroke="#bdbdbd" stroke-width="1">
<rect x="1188.5" y="147.5" width="15" height="15"/>
<path d="M1188.5,150.5 h15 M1188.5,153.5 h15 M1188.5,156.5 h15 M1188.5,159.5 h15 M1192.5,150.5 v12 M1197.5,150.5 v12"/>
</g>
<rect x="1189" y="148" width="14" height="2" fill="#ddd"/>
<g stroke-width="0.9">
<rect x="1221.5" y="154.5" width="5" height="8" fill="#c8e860" stroke="#5aa02a"/>
<rect x="1226.5" y="148.5" width="5" height="14" fill="#ffb0a8" stroke="#e04a4a"/>
<rect x="1231.5" y="151.5" width="5" height="11" fill="#a8d8ff" stroke="#3a8ad8"/>
</g>
<path d="M1237,197 h9.4 l-4.7,5 z" fill="#111"/>
<g>
<rect x="1203" y="219" width="4" height="20" fill="#606060"/>
<rect x="1208" y="222" width="3.8" height="17" fill="#707070"/>
<rect x="1213" y="229" width="4" height="10" fill="#606060"/>
<rect x="1218" y="219" width="4" height="20" fill="#949494"/>
<rect x="1223" y="227" width="4" height="12" fill="#707070"/>
</g>
<g>
<rect x="1203" y="264" width="4" height="13" fill="#e02020"/><rect x="1203" y="267" width="4" height="4" fill="#f05040"/>
<rect x="1208" y="260" width="4" height="17" fill="#e02020"/><rect x="1208" y="268" width="4" height="5" fill="#b01818"/><rect x="1208" y="273" width="4" height="4" fill="#f05040"/>
<rect x="1213" y="267" width="4" height="10" fill="#e02020"/><rect x="1213" y="273" width="4" height="4" fill="#b01818"/>
<rect x="1218" y="263" width="4" height="14" fill="#c01818"/><rect x="1218" y="270" width="4" height="6" fill="#f05040"/>
<rect x="1223" y="271" width="4" height="6" fill="#e02020"/><rect x="1223" y="271" width="4" height="1.5" fill="#b01818"/>
</g>
<g>
<rect x="1203" y="292" width="4" height="23" fill="#6a6a6a"/><rect x="1203" y="306" width="4" height="4" fill="#8c8c8c"/>
<rect x="1208" y="292" width="4" height="23" fill="#707070"/><rect x="1208" y="303" width="4" height="5" fill="#555"/>
<rect x="1213" y="292" width="4" height="23" fill="#5a5a5a"/><rect x="1213" y="294" width="4" height="3" fill="#8c8c8c"/>
<rect x="1218" y="292" width="4" height="23" fill="#8a8a8a"/><rect x="1218" y="292" width="4" height="10" fill="#5a5a5a"/>
<rect x="1223" y="292" width="4" height="23" fill="#6a6a6a"/><rect x="1223" y="297" width="4" height="3" fill="#9a9a9a"/>
</g>
<g fill="#6a6a6a"><rect x="1203.00" y="330.8" width="1.4" height="8"/><rect x="1205.05" y="332.8" width="1.4" height="6"/><rect x="1207.10" y="330.8" width="1.4" height="8"/><rect x="1209.15" y="334.8" width="1.4" height="4"/><rect x="1211.20" y="332.8" width="1.4" height="6"/><rect x="1217.20" y="335.8" width="1.4" height="3"/><rect x="1219.25" y="334.8" width="1.4" height="4"/><rect x="1221.30" y="334.8" width="1.4" height="4"/><rect x="1223.35" y="332.8" width="1.4" height="6"/><rect x="1225.40" y="330.8" width="1.4" height="8"/><rect x="1203.00" y="343.8" width="1.4" height="8"/><rect x="1205.05" y="347.8" width="1.4" height="4"/><rect x="1207.10" y="346.8" width="1.4" height="5"/><rect x="1209.15" y="348.8" width="1.4" height="3"/><rect x="1211.20" y="346.8" width="1.4" height="5"/><rect x="1217.20" y="350.8" width="1.4" height="1"/><rect x="1219.25" y="348.8" width="1.4" height="3"/><rect x="1221.30" y="346.8" width="1.4" height="5"/><rect x="1223.35" y="344.8" width="1.4" height="7"/><rect x="1225.40" y="343.8" width="1.4" height="8"/></g>
<path d="M1201.6,387.5 L1206.4,378.6 L1209.4,382.4 L1213.2,375.6 L1216.2,380.8 L1219.8,374.4 L1222.4,378 L1226.8,373.2" fill="none" stroke="#555" stroke-width="1.3"/>
<path d="M1201.4,414.6 L1206,416.6 L1213.4,408.4 L1217.6,413.6 L1222.2,411.4 L1225.6,416 L1228.3,414 V428.8 H1201.4 Z" fill="#6a6a6a"/>
<path d="M1201.4,420 L1208,418 L1214,421 L1220,418 L1228.3,421 V428.8 H1201.4 Z" fill="#8c8c8c"/>
<g fill="#6a6a6a">
<circle cx="1203.3" cy="447" r="0.9"/><circle cx="1207.2" cy="447" r="1.5"/><circle cx="1212.4" cy="447" r="2.6" fill="#5a5a5a"/><circle cx="1217.2" cy="447" r="1.4" fill="#999"/><circle cx="1221" cy="447" r="1.6" fill="#888"/><circle cx="1225.2" cy="447" r="0.6"/>
<circle cx="1203.2" cy="455" r="0.5"/><circle cx="1207.4" cy="455" r="2" fill="#999"/><circle cx="1212.2" cy="455" r="0.8"/><circle cx="1218" cy="455" r="2.2" fill="#666"/><circle cx="1222.6" cy="455" r="1.1"/><circle cx="1226" cy="455" r="1.2"/>
<circle cx="1203.6" cy="463" r="1.5" fill="#999"/><circle cx="1207.2" cy="463" r="1.2"/><circle cx="1212.6" cy="463" r="2.6" fill="#5a5a5a"/><circle cx="1217.2" cy="463" r="2" fill="#888"/><circle cx="1221.2" cy="463" r="0.6" fill="#bbb"/><circle cx="1225.4" cy="463" r="0.5"/>
</g>
<g>
<rect x="1203" y="482.4" width="24" height="21" fill="#7a7a7a"/>
<rect x="1203" y="482.4" width="12" height="12.4" fill="#4a4a4a"/>
<rect x="1215" y="482.4" width="12" height="9" fill="#8c8c8c"/>
<rect x="1215" y="491.4" width="12" height="7.6" fill="#acacac"/>
<rect x="1203" y="494.8" width="12" height="8.6" fill="#6a6a6a"/>
<rect x="1215" y="499" width="7" height="4.4" fill="#555"/>
<rect x="1222" y="499" width="5" height="4.4" fill="#777"/>
</g>
<g fill="none">
<path d="M1216.4,518.4 a12,12 0 1 1 -4,23.6" stroke="#aaa" stroke-width="2.2"/>
<path d="M1216.2,521 a9.2,9.2 0 1 1 -9.4,7" stroke="#888" stroke-width="2"/>
<circle cx="1215" cy="530.4" r="5.2" stroke="#555" stroke-width="2.6"/>
</g>
<g fill="none">
<circle cx="1207.4" cy="559.4" r="2.6" stroke="#555" stroke-width="1.8"/><path d="M1207.6,555 a4.4,4.4 0 1 1 -4.2,5.6" stroke="#9a9a9a" stroke-width="1.1"/>
<circle cx="1222.4" cy="559.4" r="2.6" stroke="#555" stroke-width="1.8"/><path d="M1222.6,555 a4.4,4.4 0 1 1 -4.2,5.6" stroke="#9a9a9a" stroke-width="1.1"/>
<circle cx="1207.4" cy="576.4" r="2.6" stroke="#555" stroke-width="1.8"/><path d="M1207.6,572 a4.4,4.4 0 1 1 -4.2,5.6" stroke="#9a9a9a" stroke-width="1.1"/>
<circle cx="1222.4" cy="576.4" r="2.6" stroke="#555" stroke-width="1.8"/><path d="M1222.6,572 a4.4,4.4 0 1 1 -4.2,5.6" stroke="#9a9a9a" stroke-width="1.1"/>
</g>
<g fill="#5a5a5a">
<circle cx="1208.4" cy="596.4" r="1.8"/><circle cx="1220" cy="594.8" r="1.8"/><circle cx="1203.6" cy="600.4" r="1.8"/><circle cx="1209.6" cy="604" r="1.8"/><circle cx="1215.4" cy="600.8" r="1.8"/><circle cx="1224.4" cy="599.6" r="1.8"/><circle cx="1208" cy="610.2" r="1.8"/><circle cx="1220" cy="614.4" r="1.8"/><circle cx="1203.4" cy="618.8" r="1.8"/>
</g>
<rect x="1203" y="633" width="10" height="1" fill="#aaa"/>
<!-- scrollbar -->
<rect x="1259" y="128" width="15" height="510" fill="#fafafa"/>
<path d="M1262,139 h8.8 l-4.4,-5.2 z" fill="#8a8a8a"/>
<rect x="1262" y="145.8" width="8.8" height="416" rx="4.4" fill="#8a8a8a"/>
<path d="M1261.8,622.6 h9.4 l-4.7,4.6 z" fill="#8a8a8a"/>
<!-- box close circles -->
<g fill="#f2f2f2" stroke="#e6e6e6" stroke-width="1">
<circle cx="708" cy="266" r="6"/><circle cx="708" cy="381" r="6"/><circle cx="708" cy="496" r="6"/>
</g>
<g stroke="#fff" stroke-width="1.2"><path d="M705.5,263.5 l5,5 M710.5,263.5 l-5,5 M705.5,378.5 l5,5 M710.5,378.5 l-5,5 M705.5,493.5 l5,5 M710.5,493.5 l-5,5"/></g>
<!-- bottom tab close -->
<path d="M97.8,646.2 L107.8,656.8 M107.8,646.2 L97.8,656.8" stroke="#111" stroke-width="2.6"/>
</svg>

</body></html>
